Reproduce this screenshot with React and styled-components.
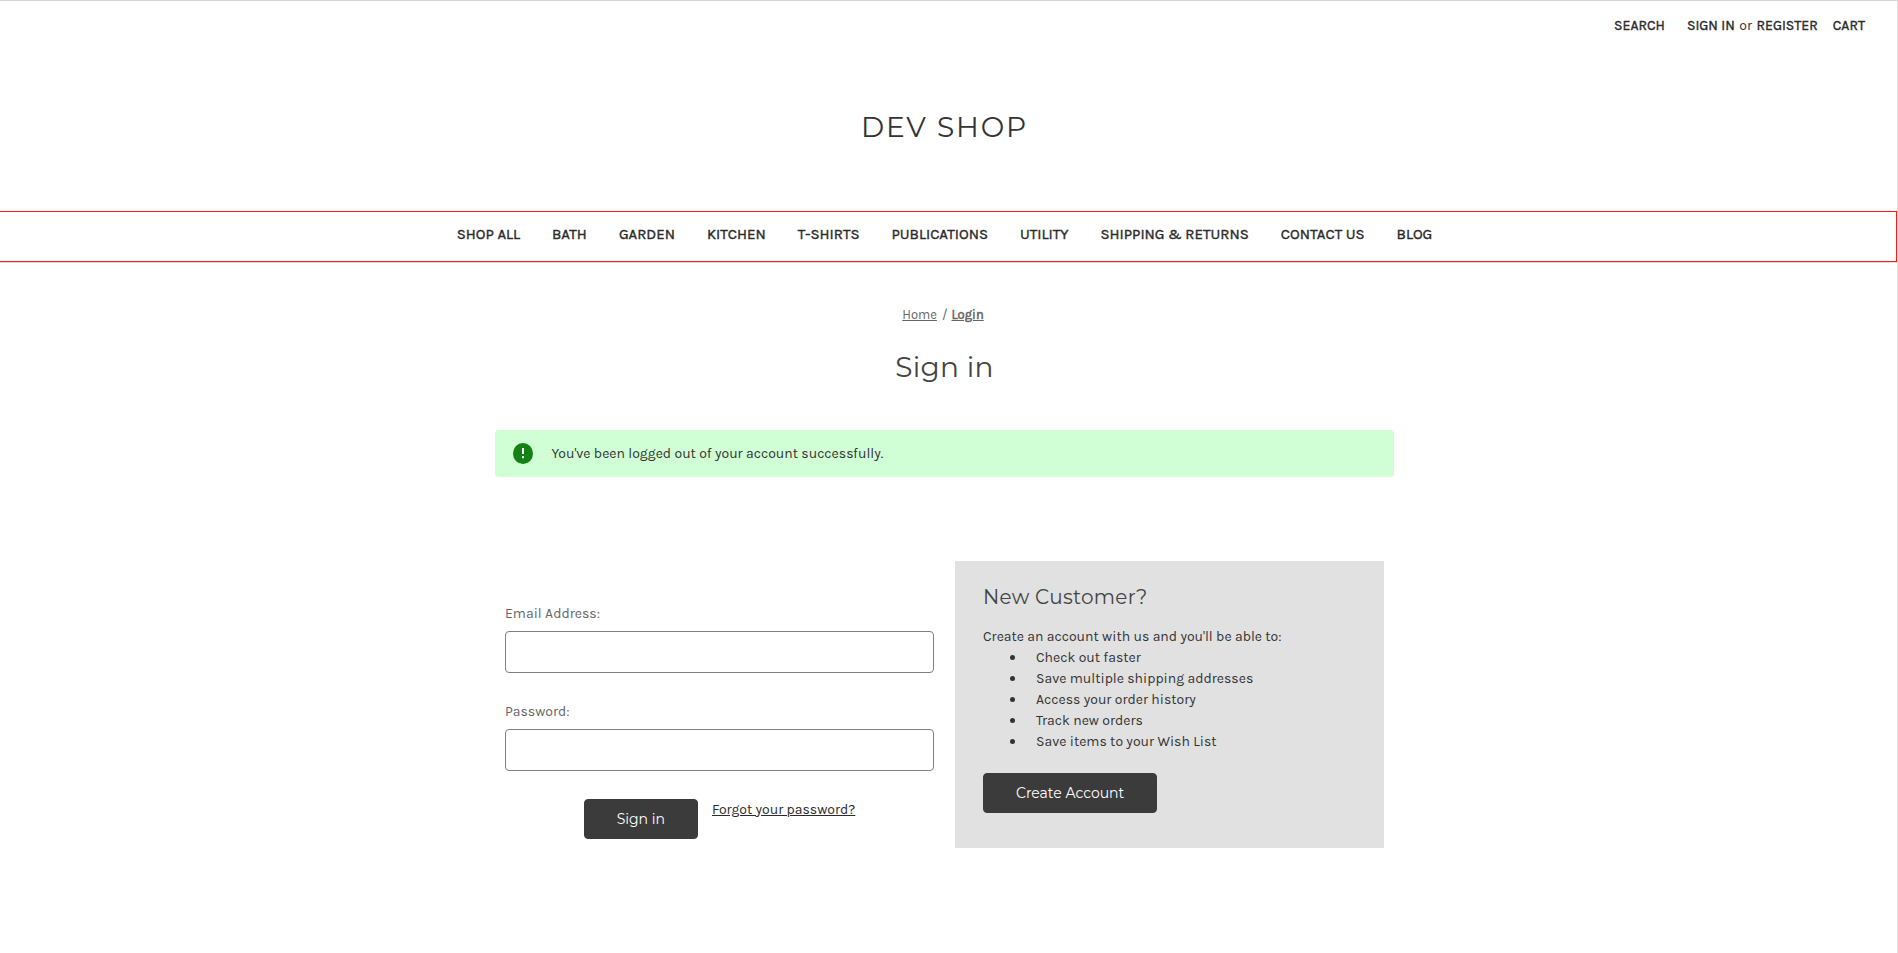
import React from 'react';
import styled, { createGlobalStyle } from 'styled-components';

const GlobalStyle = createGlobalStyle`
  *, *::before, *::after { box-sizing: border-box; }
  body {
    margin: 0;
    background: #fff;
    color: #333;
    font: 400 14px/21px Karla, Roboto, "Liberation Sans", sans-serif;
  }
  a { color: #2b2b2b; }
`;

const headingFont = 'Montserrat, Lato, "Open Sans", sans-serif';

const Page = styled.div`
  height: 953px;
  overflow: hidden;
  border-top: 1px solid #d4d4d4;
  border-right: 1px solid #e0e0e0;
`;

const UserBar = styled.nav`
  height: 50px;
  padding: 14px 32px 0 0;
  display: flex;
  justify-content: flex-end;
`;

const UserItem = styled.div`
  display: flex;
  gap: 4.5px;
  margin-left: ${(p) => p.$gap || 0}px;
`;

const UserLink = styled.a`
  text-decoration: none;
  text-transform: uppercase;
  -webkit-text-stroke: 0.4px #2b2b2b;
`;

const Logo = styled.h1`
  height: 160px;
  margin: 0;
  padding: 55px 8px 0 0;
  font: 400 28px/42px ${headingFont};
  letter-spacing: 1.9px;
  text-align: center;
`;

const MainNav = styled.nav`
  height: 51px;
  padding: 11px 7px 0 0;
  display: flex;
  justify-content: center;
  gap: 32px;
  border: 1px solid #fb1a14;
  border-left: 0;
  box-shadow: 0 1px 0 #dedede;
`;

const NavLink = styled.a`
  font-size: 15px;
  line-height: 22px;
  text-decoration: none;
  text-transform: uppercase;
  white-space: nowrap;
  -webkit-text-stroke: 0.4px #2b2b2b;
`;

const Main = styled.main`
  padding: 43px 8px 0 0;
  display: flex;
  flex-direction: column;
  align-items: center;
`;

const Breadcrumbs = styled.div`
  display: flex;
  font-size: 13px;
  line-height: 20px;
  color: #666;
  padding-right: 3px;
`;

const Crumb = styled.a`
  color: #666;
  ${(p) => p.$active && '-webkit-text-stroke: 0.5px #666;'}
`;

const Slash = styled.span`
  margin: 0 4px 0 5px;
`;

const Title = styled.h2`
  margin: 21px 0 0;
  font: 400 28px/42px ${headingFont};
  letter-spacing: 0.25px;
  color: #444;
`;

const Alert = styled.div`
  width: 899px;
  height: 47px;
  margin-top: 42px;
  padding-left: 18px;
  display: flex;
  align-items: center;
  gap: 18.5px;
  border-radius: 4px;
  background: #d0fed5;
`;

const Columns = styled.div`
  width: 879px;
  margin-top: 84px;
  display: grid;
  grid-template-columns: 429px 429px;
  gap: 21px;
`;

const Form = styled.form`
  padding-top: 42px;
`;

const Field = styled.label`
  display: block;
  margin-bottom: 28px;
  color: #666;
`;

const Input = styled.input`
  display: block;
  width: 100%;
  height: 42px;
  margin-top: 7px;
  border: 1px solid #808080;
  border-radius: 4px;
  background: #fff;
`;

const Actions = styled.div`
  display: flex;
  justify-content: center;
  gap: 14px;
`;

const Button = styled.button`
  height: 40px;
  padding: 0 32px;
  border: 1px solid #3b3b3b;
  border-radius: 4px;
  background: #3b3b3b;
  color: #fff;
  font: 400 14px/20px ${headingFont};
`;

const Panel = styled.section`
  height: 287px;
  padding: 21px 28px;
  background: #e1e1e1;
`;

const PanelTitle = styled.h3`
  margin: 0 0 14px;
  font: 400 20px/30px ${headingFont};
  letter-spacing: 0.28px;
  color: #444;
`;

const Text = styled.p`
  margin: 0;
`;

const Benefits = styled.ul`
  margin: 0 0 21px;
  padding: 0 0 0 27px;
  list-style: none;
`;

const Benefit = styled.li`
  display: flex;
  align-items: center;
  gap: 21px;

  &::before {
    content: '';
    width: 5px;
    height: 5px;
    border-radius: 50%;
    background: #333;
  }
`;

const categories = ['Shop All', 'Bath', 'Garden', 'Kitchen', 'T-Shirts', 'Publications', 'Utility', 'Shipping & Returns', 'Contact Us', 'Blog'];
const benefits = ['Check out faster', 'Save multiple shipping addresses', 'Access your order history', 'Track new orders', 'Save items to your Wish List'];

export default function App() {
  return (
    <>
      <GlobalStyle />
      <Page>
        <UserBar>
          <UserItem><UserLink href="#">Search</UserLink></UserItem>
          <UserItem $gap={22}>
            <UserLink href="#">Sign in</UserLink>
            <span>or</span>
            <UserLink href="#">Register</UserLink>
          </UserItem>
          <UserItem $gap={15}><UserLink href="#">Cart</UserLink></UserItem>
        </UserBar>
        <Logo>DEV SHOP</Logo>
        <MainNav>
          {categories.map((name) => <NavLink key={name} href="#">{name}</NavLink>)}
        </MainNav>
        <Main>
          <Breadcrumbs>
            <Crumb href="#">Home</Crumb>
            <Slash>/</Slash>
            <Crumb href="#" $active>Login</Crumb>
          </Breadcrumbs>
          <Title>Sign in</Title>
          <Alert>
            <svg width="20" height="21" viewBox="0 0 20 21">
              <ellipse cx="10" cy="10.5" rx="10" ry="10.5" fill="#138113" />
              <path d="M9 5h2v6H9zM9 13h2v2.2H9z" fill="#fff" />
            </svg>
            <span>You've been logged out of your account successfully.</span>
          </Alert>
          <Columns>
            <Form>
              <Field>Email Address:<Input type="email" /></Field>
              <Field>Password:<Input type="password" /></Field>
              <Actions>
                <Button type="button">Sign in</Button>
                <a href="#">Forgot your password?</a>
              </Actions>
            </Form>
            <Panel>
              <PanelTitle>New Customer?</PanelTitle>
              <Text>Create an account with us and you'll be able to:</Text>
              <Benefits>
                {benefits.map((b) => <Benefit key={b}>{b}</Benefit>)}
              </Benefits>
              <Button type="button">Create Account</Button>
            </Panel>
          </Columns>
        </Main>
      </Page>
    </>
  );
}
